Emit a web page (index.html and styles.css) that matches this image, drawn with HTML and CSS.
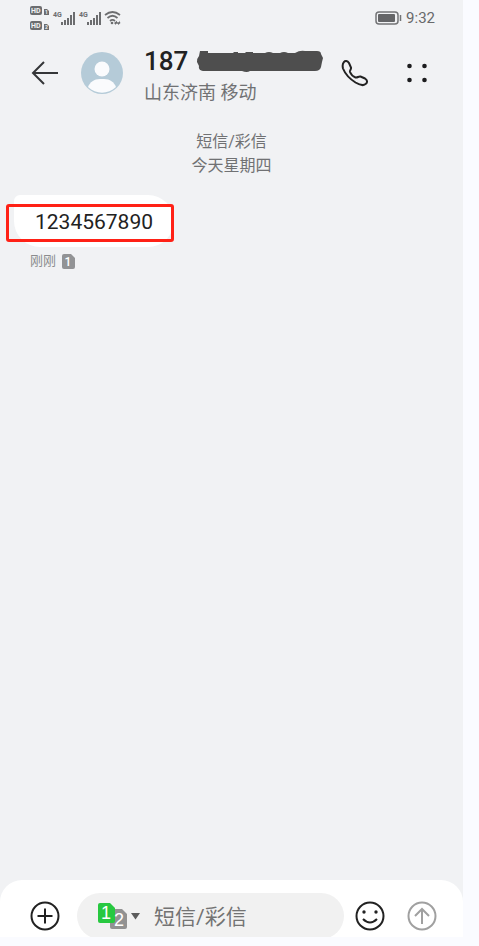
FILE: index.html
```
<!DOCTYPE html>
<html lang="zh-CN">
	<head>
		<meta charset="UTF-8" />
		<meta name="viewport" content="width=device-width, initial-scale=1.0" />
		<title>短信/彩信</title>
		<link rel="stylesheet" href="styles.css">
	</head>
	<body>
		<div class="phone">
			<!-- Status bar -->
			<div class="status">
				<svg class="signals" width="94" height="28" viewBox="0 0 94 28">
					<g fill="#6c6d6f">
						<rect x="1" y="2" width="12" height="9" rx="2" />
						<rect x="1" y="17" width="12" height="9" rx="2" />
						<path d="M15 5h3l2 2v4h-5zM15 20h3l2 2v4h-5z" />
						<path d="M32 18h2v3h-2zM35 16h2v5h-2zM38 14h2v7h-2zM41 11h2v10h-2zM44 8h2v13h-2z" />
						<path d="M58 18h2v3h-2zM61 16h2v5h-2zM64 14h2v7h-2zM67 11h2v10h-2zM70 8h2v13h-2z" />
						<circle cx="83" cy="19" r="1.3" />
						<path d="M85 19l3-2.200v1.400h2v-1.400l1.500 2.200-2.500 2v-1.300h-2V21z" />
					</g>
					<g class="tiny-light">
						<text x="2" y="9">HD</text>
						<text x="2" y="24">HD</text>
					</g>
					<g class="tiny-mini">
						<text x="16" y="10">1</text>
						<text x="16" y="25">2</text>
					</g>
					<g class="tiny-dark">
						<text x="24" y="13">4G</text>
						<text x="50" y="13">4G</text>
					</g>
					<path d="M76 11q7.500-6 15 0M78.500 14q5-4.500 10 0M81 17q2.500-2.200 5 0" fill="none" stroke="#6c6d6f" stroke-width="1.700" />
				</svg>
				<div class="status-right">
					<svg width="27" height="16" viewBox="0 0 27 16">
						<rect x="1" y="2" width="22" height="12" rx="3" fill="none" stroke="#737476" stroke-width="1.500" />
						<rect x="3" y="4" width="17" height="8" rx="1" fill="#646567" />
						<path d="M25.500 5v6" stroke="#737476" stroke-width="1.500" />
					</svg>
					<span>9:32</span>
				</div>
			</div>

			<!-- Contact -->
			<header class="header">
				<button class="icon-btn" aria-label="返回">
					<svg width="28" height="26" viewBox="0 0 28 26">
						<path d="M27 13H2M13 2L2 13l11 11" fill="none" stroke="#353638" stroke-width="2" />
					</svg>
				</button>
				<svg class="avatar" width="42" height="42" viewBox="0 0 42 42">
					<circle cx="21" cy="21" r="21" fill="#b5cbd8" />
					<circle cx="21" cy="17" r="7.500" fill="#fafbfd" />
					<path d="M7 35c2-5 6-8 12-8h4c6 0 10 3 12 8-8 7.500-20 7.500-28 0z" fill="#fafbfd" />
				</svg>
				<div class="contact">
					<h1 class="number">
						187
						<svg width="128" height="24" viewBox="0 0 128 24">
							<path d="M4 2h8v2h25l1-1h4v1h7l1-1h7v1h12q4-2 8 0h7q4-2 8 0h7q5-3 10-2h12q4 0 4 3l2 4-1 4-1 5q-1 4-6 4H54q-3 2-8 0H7q-5-1-4-5l-2-4q0-4 2-6z" fill="#4e4e4e" />
						</svg>
					</h1>
					<p class="place">山东济南 移动</p>
				</div>
				<button class="icon-btn call" aria-label="拨打电话">
					<svg width="28" height="28" viewBox="0 0 28 28">
						<path d="M3 3C4 1.500 6.500 1.500 8 4l2 4.500c.500 2-1.500 2.500-1 4.500 1 2.500 3 4.500 5.500 5.500 2 .5 3-1.500 5-1l4.500 2c2.500 1.500 2.500 4 1 5.200-2 2.300-5.500 1.800-10.500-1.200C9 20 4 14.500 2 9.500 1.300 6.500 1.500 4.500 3 3z" fill="none" stroke="#222" stroke-width="2" />
					</svg>
				</button>
				<button class="icon-btn more" aria-label="更多">
					<svg width="20" height="20" viewBox="0 0 20 20" fill="#1c1c1e">
						<circle cx="2.500" cy="3" r="2.300" />
						<circle cx="17.500" cy="3" r="2.300" />
						<circle cx="2.500" cy="17" r="2.300" />
						<circle cx="17.500" cy="17" r="2.300" />
					</svg>
				</button>
			</header>

			<!-- Conversation -->
			<main class="thread">
				<div class="day">
					<p>短信/彩信</p>
					<p>今天星期四</p>
				</div>
				<div class="bubble">
					1234567890
					<span class="highlight"></span>
				</div>
				<div class="meta">
					<span>刚刚</span>
					<svg width="13" height="15" viewBox="0 0 13 15">
						<path d="M2 0h7l4 4v9q0 2-2 2H2q-2 0-2-2V2q0-2 2-2z" fill="#929395" />
						<text class="meta-sim" x="6" y="12">1</text>
					</svg>
				</div>
			</main>

			<!-- Composer -->
			<form class="composer">
				<button type="button" class="icon-btn" aria-label="添加">
					<svg width="30" height="30" viewBox="0 0 30 30" fill="none" stroke="#222" stroke-width="2">
						<circle cx="15" cy="15" r="13.500" />
						<path d="M7.500 15h15M15 7.500v15" />
					</svg>
				</button>
				<div class="field">
					<button type="button" class="icon-btn" aria-label="选择 SIM 卡">
						<svg width="44" height="28" viewBox="0 0 44 28">
							<path d="M14 7h10l5 5v13q0 2-2 2H14q-2 0-2-2V9q0-2 2-2z" fill="#929292" />
							<path d="M2 1h10l5 5v13q0 2-2 2H2q-2 0-2-2V3q0-2 2-2z" fill="#27c840" />
							<text class="sim" x="8" y="17">1</text>
							<text class="sim" x="21" y="24">2</text>
							<path d="M33 11h9l-4.500 6.500z" fill="#5c5c5c" />
						</svg>
					</button>
					<input type="text" placeholder="短信/彩信" aria-label="短信/彩信" />
				</div>
				<button type="button" class="icon-btn" aria-label="表情">
					<svg width="30" height="30" viewBox="0 0 30 30" fill="none" stroke="#222" stroke-width="2">
						<circle cx="15" cy="15" r="13.500" />
						<path d="M8 18q7 7 14 0" />
						<circle cx="9" cy="11" r="1.700" fill="#222" stroke="none" />
						<circle cx="21" cy="11" r="1.700" fill="#222" stroke="none" />
					</svg>
				</button>
				<button type="submit" class="icon-btn send" aria-label="发送">
					<svg width="30" height="30" viewBox="0 0 30 30" fill="none" stroke="#a0a0a0" stroke-width="2">
						<circle cx="15" cy="15" r="13.500" />
						<path d="M15 23V8M8 15l7-7 7 7" />
					</svg>
				</button>
			</form>
		</div>
	</body>
</html>
```
FILE: styles.css
```
* {
	box-sizing: border-box;
}
body {
	margin: 0;
	padding: 0 16px 9px 0;
	min-height: 100vh;
	display: flex;
	background: #fafbff;
	font-family: Roboto, "Noto Sans CJK SC", sans-serif;
	color: #222;
}
h1,
p {
	margin: 0;
}
svg {
	display: block;
	flex: none;
}
.phone {
	flex: 1;
	min-width: 0;
	display: flex;
	flex-direction: column;
	background: #f1f2f4;
}

/* Status bar */
.status {
	display: flex;
	justify-content: space-between;
	align-items: center;
	height: 36px;
	padding: 0 28px 0 29px;
}
.status-right {
	display: flex;
	align-items: center;
	gap: 4px;
	font-size: 15px;
	line-height: 20px;
	color: #68696b;
}
.signals text {
	font-weight: 700;
	font-size: 7px;
}
.tiny-light,
.tiny-mini {
	fill: #f1f2f4;
}
.signals .tiny-mini text {
	font-size: 5px;
}
.tiny-dark {
	fill: #6c6d6f;
}

/* Header */
.icon-btn {
	flex: none;
	padding: 0;
	border: none;
	background: none;
	cursor: pointer;
}
.header {
	display: flex;
	align-items: center;
	height: 74px;
	padding: 0 36px 0 31px;
}
.avatar {
	margin-left: 22px;
}
.contact {
	flex: 1;
	min-width: 0;
	margin-left: 21px;
	padding-top: 8px;
}
.number {
	display: flex;
	align-items: center;
	gap: 8px;
	font-size: 26px;
	font-weight: 500;
	line-height: 32px;
}
.place {
	font-size: 18px;
	line-height: 32px;
	color: #707173;
}
.more {
	margin-left: 38px;
}

/* Messages */
.thread {
	flex: 1;
	padding: 20px 14px;
}
.day {
	padding-bottom: 17px;
	text-align: center;
	font-size: 16px;
	line-height: 24px;
	color: #707173;
}
.bubble {
	position: relative;
	width: fit-content;
	padding: 2px 21px 0;
	border-radius: 6px 26px 26px 26px;
	background: #fff;
	font-size: 21px;
	line-height: 50px;
}
.highlight {
	position: absolute;
	inset: 9px 0 5px -8px;
	border: 3px solid #ff2116;
	border-radius: 3px;
}
.meta {
	display: flex;
	align-items: center;
	gap: 6px;
	padding: 4px 16px;
	font-size: 13px;
	line-height: 20px;
	color: #8b8c8e;
}
.meta-sim,
.sim {
	fill: #fff;
	font-weight: 500;
	text-anchor: middle;
}
.meta-sim {
	font-size: 12px;
}
.sim {
	font-size: 18px;
}

/* Composer */
.composer {
	display: flex;
	align-items: center;
	height: 57px;
	padding: 15px 26px 0 30px;
	border-radius: 22px 22px 0 0;
	background: #fff;
	overflow: hidden;
}
.field {
	flex: 1;
	min-width: 0;
	display: flex;
	align-items: center;
	gap: 12px;
	height: 46px;
	margin: 0 11px 0 17px;
	padding: 0 21px;
	border-radius: 23px;
	background: #f1f1f1;
}
.field input {
	flex: 1;
	min-width: 0;
	padding: 2px 0 0;
	border: none;
	outline: none;
	background: none;
	font: inherit;
	font-size: 21px;
	color: #222;
}
.field input::placeholder {
	color: #737373;
	opacity: 1;
}
.send {
	margin-left: 22px;
}
```
